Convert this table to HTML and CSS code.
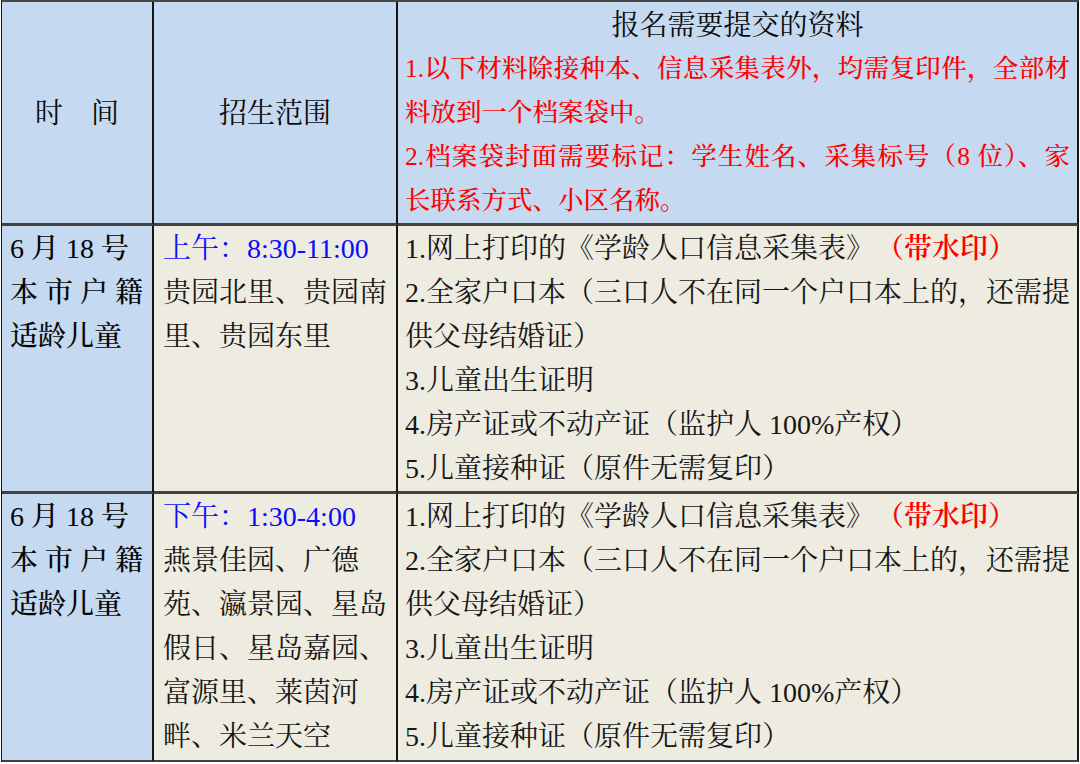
FILE: index.html
```html
<!DOCTYPE html>
<html lang="zh-CN">
<head>
<meta charset="utf-8">
<title>报名需要提交的资料</title>
<link rel="stylesheet" href="styles.css">
</head>
<body>
<table class="sheet">
  <colgroup>
    <col class="col-time">
    <col class="col-range">
    <col class="col-docs">
  </colgroup>
  <thead>
    <tr>
      <th class="cell head-time">时&emsp;间</th>
      <th class="cell head-range">招生范围</th>
      <th class="cell head-docs">
        <div class="title">报名需要提交的资料</div>
        <div class="note">
          <div class="ln spread">1.以下材料除接种本、信息采集表外，均需复印件，全部材</div>
          <div class="ln">料放到一个档案袋中。</div>
          <div class="ln spread">2.档案袋封面需要标记：学生姓名、采集标号（8 位）、家</div>
          <div class="ln">长联系方式、小区名称。</div>
        </div>
      </th>
    </tr>
  </thead>
  <tbody>
    <tr>
      <td class="cell time">
        <div class="ln">6 月 18 号</div>
        <div class="ln spread">本市户籍</div>
        <div class="ln">适龄儿童</div>
      </td>
      <td class="cell range">
        <div class="ln slot">上午：8:30-11:00</div>
        <div class="ln">贵园北里、贵园南</div>
        <div class="ln">里、贵园东里</div>
      </td>
      <td class="cell docs">
        <div class="ln">1.网上打印的《学龄人口信息采集表》<span class="mark">（带水印）</span></div>
        <div class="ln">2.全家户口本（三口人不在同一个户口本上的，还需提</div>
        <div class="ln">供父母结婚证）</div>
        <div class="ln">3.儿童出生证明</div>
        <div class="ln">4.房产证或不动产证（监护人 100%产权）</div>
        <div class="ln">5.儿童接种证（原件无需复印）</div>
      </td>
    </tr>
    <tr class="last">
      <td class="cell time">
        <div class="ln">6 月 18 号</div>
        <div class="ln spread">本市户籍</div>
        <div class="ln">适龄儿童</div>
      </td>
      <td class="cell range">
        <div class="ln slot">下午：1:30-4:00</div>
        <div class="ln">燕景佳园、广德</div>
        <div class="ln">苑、瀛景园、星岛</div>
        <div class="ln">假日、星岛嘉园、</div>
        <div class="ln">富源里、莱茵河</div>
        <div class="ln">畔、米兰天空</div>
      </td>
      <td class="cell docs">
        <div class="ln">1.网上打印的《学龄人口信息采集表》<span class="mark">（带水印）</span></div>
        <div class="ln">2.全家户口本（三口人不在同一个户口本上的，还需提</div>
        <div class="ln">供父母结婚证）</div>
        <div class="ln">3.儿童出生证明</div>
        <div class="ln">4.房产证或不动产证（监护人 100%产权）</div>
        <div class="ln">5.儿童接种证（原件无需复印）</div>
      </td>
    </tr>
  </tbody>
</table>
</body>
</html>
```

FILE: styles.css
```css
html, body {
  margin: 0;
  padding: 0;
  background: #ffffff;
}

body {
  font-family: "Liberation Serif", "Noto Serif CJK SC", "Noto Sans CJK SC", serif;
  font-size: 28px;
  line-height: 44px;
  color: #111111;
}

.sheet {
  margin: 0 0 0 1px;
  border-collapse: separate;
  border-spacing: 0;
  table-layout: fixed;
  width: 1077px;
  border-top: 2px solid #464646;
  border-left: 1px solid #111111;
}

.col-time { width: 152px; }
.col-range { width: 244px; }
.col-docs { width: 681px; }

.cell {
  border-right: 2px solid #151515;
  border-bottom: 3px solid #424242;
  padding: 1px 0 0 0;
  vertical-align: top;
  font-weight: normal;
  text-align: left;
}

.last .cell {
  border-bottom-width: 2px;
  padding-bottom: 1px;
}

thead .cell {
  background: #c5d9f0;
  color: #0a0a0a;
}

.head-time,
.head-range {
  vertical-align: middle;
  text-align: center;
  padding: 2px 0 0 0;
}

.head-docs {
  padding: 2px 7px 0 7px;
}

.title {
  text-align: center;
  font-size: 28px;
  line-height: 43px;
}

.note {
  color: #ff0000;
  font-size: 25.5px;
  line-height: 44px;
  font-weight: 500;
}

.ln {
  white-space: nowrap;
}

.spread {
  text-align: justify;
  text-align-last: justify;
}

.time {
  background: #c5d9f0;
  color: #050505;
  font-weight: 500;
  padding-left: 8px;
  padding-right: 9px;
}

.range {
  background: #eeece1;
  color: #161616;
  padding-left: 9px;
  padding-right: 4px;
}

.slot {
  color: #0b0bff;
}

.docs {
  background: #eeece1;
  color: #161616;
  padding-left: 7px;
  padding-right: 7px;
}

.mark {
  color: #ff0000;
  font-weight: 600;
  margin-left: 16px;
}
```
